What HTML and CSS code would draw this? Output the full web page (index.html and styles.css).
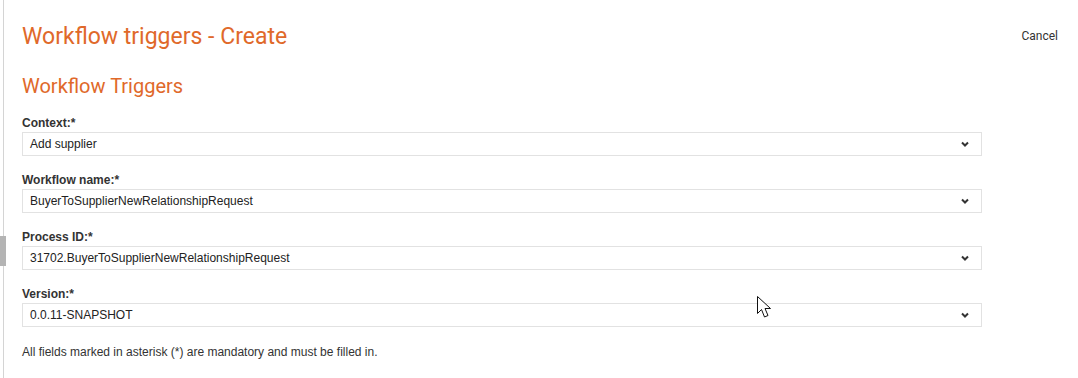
FILE: index.html
```html
<!DOCTYPE html>
<html lang="en">
<head>
    <meta charset="UTF-8">
    <title>Workflow triggers - Create</title>
    <link rel="stylesheet" href="styles.css">
</head>
<body>
    <div class="side-handle"></div>
    <div id="page">
        <div class="page-header">
            <h1>Workflow triggers - Create</h1>
            <a class="cancel" href="#">Cancel</a>
        </div>

        <h2>Workflow Triggers</h2>

        <div class="field">
            <label>Context:*</label>
            <div class="select">
                <span>Add supplier</span>
                <svg class="chevron" width="8" height="6" viewBox="0 0 8 6"><path d="M1 1.5 L4 4.5 L7 1.5" fill="none" stroke="#333" stroke-width="2"/></svg>
            </div>
        </div>

        <div class="field">
            <label>Workflow name:*</label>
            <div class="select">
                <span>BuyerToSupplierNewRelationshipRequest</span>
                <svg class="chevron" width="8" height="6" viewBox="0 0 8 6"><path d="M1 1.5 L4 4.5 L7 1.5" fill="none" stroke="#333" stroke-width="2"/></svg>
            </div>
        </div>

        <div class="field">
            <label>Process ID:*</label>
            <div class="select">
                <span>31702.BuyerToSupplierNewRelationshipRequest</span>
                <svg class="chevron" width="8" height="6" viewBox="0 0 8 6"><path d="M1 1.5 L4 4.5 L7 1.5" fill="none" stroke="#333" stroke-width="2"/></svg>
            </div>
        </div>

        <div class="field">
            <label>Version:*</label>
            <div class="select">
                <span>0.0.11-SNAPSHOT</span>
                <svg class="chevron" width="8" height="6" viewBox="0 0 8 6"><path d="M1 1.5 L4 4.5 L7 1.5" fill="none" stroke="#333" stroke-width="2"/></svg>
            </div>
        </div>

        <p class="note">All fields marked in asterisk (*) are mandatory and must be filled in.</p>
    </div>

    <!-- mouse pointer captured in the screenshot -->
    <svg class="pointer" width="22" height="26" viewBox="0 0 22 26">
        <path d="M0.5 0.5 L0.5 17.5 L4.5 13.5 L7.5 21 L11 19.5 L8 12.5 L13.5 12.5 Z" fill="#fff" stroke="#111" stroke-width="1" stroke-linejoin="miter"/>
    </svg>
</body>
</html>
```

FILE: styles.css
```css
body {
    margin: 0;
    padding: 0;
    background: #fff;
    color: #333;
    font-family: 'Liberation Sans', Arial, sans-serif;
    font-size: 12px;
}

#page {
    margin-left: 3px;
    border-left: 1px solid #d4d4d4;
    min-height: 378px;
    box-sizing: border-box;
    padding: 23px 20px 0 18px;
}

.side-handle {
    position: absolute;
    left: 0;
    top: 236px;
    width: 6px;
    height: 30px;
    background: #b4b4b4;
}

.page-header {
    display: flex;
    justify-content: space-between;
    align-items: flex-start;
}

h1 {
    margin: 0;
    font-family: Roboto, sans-serif;
    font-weight: 400;
    font-size: 23px;
    line-height: 28px;
    color: #e0692a;
}

.cancel {
    margin-top: 6px;
    font-family: Roboto, sans-serif;
    font-size: 12px;
    color: #333;
    text-decoration: none;
}

h2 {
    margin: 23px 0 18px;
    font-family: Roboto, sans-serif;
    font-weight: 400;
    font-size: 20px;
    line-height: 24px;
    color: #e0692a;
}

.field {
    margin-bottom: 17px;
    width: 960px;
}

.field label {
    display: block;
    font-weight: bold;
    line-height: 14px;
    margin-bottom: 2px;
    color: #333;
}

.select {
    display: flex;
    align-items: center;
    justify-content: space-between;
    height: 24px;
    box-sizing: border-box;
    border: 1px solid #e2e2e2;
    padding: 0 12px 0 7px;
    color: #222;
}

.chevron {
    display: block;
}

.note {
    margin: 18px 0 0;
    line-height: 14px;
    color: #333;
}

.pointer {
    position: absolute;
    left: 757px;
    top: 296px;
}
```
